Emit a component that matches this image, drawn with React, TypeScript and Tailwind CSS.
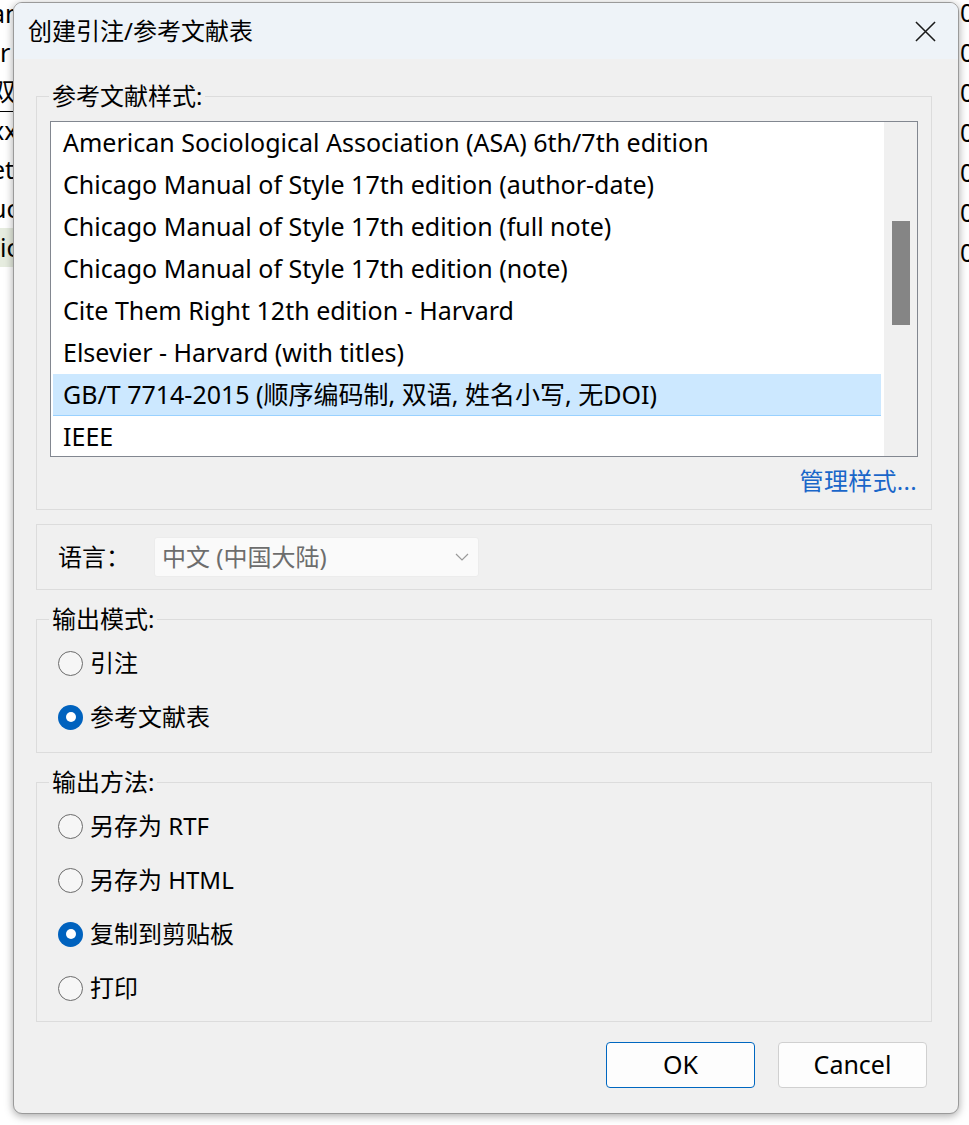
const FONT = '"Noto Sans", "Noto Sans CJK SC", sans-serif'

const styles = [
  'American Sociological Association (ASA) 6th/7th edition',
  'Chicago Manual of Style 17th edition (author-date)',
  'Chicago Manual of Style 17th edition (full note)',
  'Chicago Manual of Style 17th edition (note)',
  'Cite Them Right 12th edition - Harvard',
  'Elsevier - Harvard (with titles)',
  'GB/T 7714-2015 (顺序编码制, 双语, 姓名小写, 无DOI)',
  'IEEE',
]

const leftRows = [
  { t: 'an', bg: false },
  { t: 'tr', bg: false },
  { t: '双|', bg: false },
  { t: 'xx', bg: false },
  { t: 'et', bg: false },
  { t: 'uc', bg: false },
  { t: 'tic', bg: true },
]

function Radio({ label, checked }: { label: string; checked?: boolean }) {
  return (
    <div className="flex items-center h-[54px]">
      {checked ? (
        <span className="w-[25px] h-[25px] rounded-full bg-[#0062be] flex items-center justify-center">
          <span className="w-[10px] h-[10px] rounded-full bg-white" />
        </span>
      ) : (
        <span className="w-[25px] h-[25px] rounded-full border-[1.5px] border-[#6b6b6b] bg-[#f6f6f6]" />
      )}
      <span className="ml-[7px] text-[24px] leading-[32px] text-black">{label}</span>
    </div>
  )
}

function Group({ title, className, children }: { title?: string; className?: string; children: React.ReactNode }) {
  return (
    <fieldset className={`border border-[#dcdcdc] ml-[22px] mr-[26px] ${className ?? ''}`}>
      {title && <legend className="ml-[12px] px-[3px] text-[24px] leading-[30px] text-black">{title}</legend>}
      {children}
    </fieldset>
  )
}

export default function App() {
  return (
    <div className="w-[969px] h-[1125px] bg-white flex overflow-hidden" style={{ fontFamily: FONT }}>
      <div className="w-[13px] shrink-0 overflow-hidden">
        <div className="-mt-[6px]">
          {leftRows.map((r, i) => (
            <div
              key={i}
              className={`h-[39px] flex items-center whitespace-nowrap text-[25px] text-black -ml-[9px] ${
                r.bg ? 'bg-[#e6ecdf]' : ''
              } ${i === 3 ? 'border-t border-black' : ''}`}
            >
              {r.t}
            </div>
          ))}
        </div>
      </div>

      <div className="w-[946px] h-[1112px] mt-[2px] shrink-0 bg-[#f0f0f0] border border-[#9a9a9a] rounded-[9px] shadow-[0_2px_8px_rgba(0,0,0,0.35)] overflow-hidden flex flex-col">
        <div className="h-[56px] bg-[#eef3f8] flex items-center justify-between pl-[14px] pr-[22px] shrink-0">
          <span className="text-[24px] leading-[32px] text-black">创建引注/参考文献表</span>
          <svg width="21" height="21" viewBox="0 0 22 22" fill="none" stroke="#1a1a1a" strokeWidth="1.6">
            <path d="M1 1 L21 21 M21 1 L1 21" />
          </svg>
        </div>

        <Group title="参考文献样式:" className="mt-[22px] pb-[11px]">
          <div className="px-[13px] pt-[10px]">
            <div className="h-[336px] border border-[#828790] bg-white flex overflow-hidden">
              <div className="flex-1 pl-[2px] pr-[3px]">
                {styles.map((s, i) => (
                  <div
                    key={s}
                    className={`h-[42px] flex items-center pl-[10px] text-[25px] text-black whitespace-nowrap ${
                      i === 6 ? 'bg-[#cce8ff] border-b border-[#99d1ff]' : ''
                    }`}
                  >
                    {s}
                  </div>
                ))}
              </div>
              <div className="w-[33px] bg-[#f0f0f0] flex justify-center pt-[99px]">
                <div className="w-[18px] h-[104px] bg-[#858585]" />
              </div>
            </div>
            <div className="flex justify-end mt-[7px] pr-[1px]">
              <span className="text-[24px] text-[#1a66c9] leading-[34px] tracking-[0.3px]">管理样式...</span>
            </div>
          </div>
        </Group>

        <Group className="mt-[14px]">
          <div className="h-[64px] flex items-center pl-[21px]">
            <span className="text-[24px] leading-[32px] text-black w-[96px]">语言：</span>
            <div className="w-[325px] h-[40px] bg-[#fafafa] border border-[#ececec] rounded-[3px] flex items-center justify-between pl-[7px] pr-[9px]">
              <span className="text-[24px] leading-[32px] text-[#6d6d6d]">中文 (中国大陆)</span>
              <svg width="14" height="8" viewBox="0 0 14 8" fill="none" stroke="#9a9a9a" strokeWidth="1.2">
                <path d="M1 1 L7 7 L13 1" />
              </svg>
            </div>
          </div>
        </Group>

        <Group title="输出模式:" className="mt-[14px] pb-[8px]">
          <div className="pl-[21px] pt-[2px]">
            <Radio label="引注" />
            <Radio label="参考文献表" checked />
          </div>
        </Group>

        <Group title="输出方法:" className="mt-[14px] pb-[6px]">
          <div className="pl-[21px] pt-[2px]">
            <Radio label="另存为 RTF" />
            <Radio label="另存为 HTML" />
            <Radio label="复制到剪贴板" checked />
            <Radio label="打印" />
          </div>
        </Group>

        <div className="flex justify-end gap-[23px] pr-[31px] mt-[20px]">
          <button className="w-[149px] h-[46px] bg-[#fdfdfd] border border-[#0067c0] rounded-[4px] text-[25px] text-black">
            OK
          </button>
          <button className="w-[149px] h-[46px] bg-[#fdfdfd] border border-[#d0d0d0] rounded-[4px] text-[25px] text-black">
            Cancel
          </button>
        </div>
      </div>

      <div className="w-[10px] shrink-0 overflow-hidden">
        <div className="-mt-[7px]">
          {Array.from({ length: 7 }).map((_, i) => (
            <div key={i} className="h-[40px] flex items-center text-[25px] text-black whitespace-nowrap pl-[1px]">
              0
            </div>
          ))}
        </div>
      </div>
    </div>
  )
}
